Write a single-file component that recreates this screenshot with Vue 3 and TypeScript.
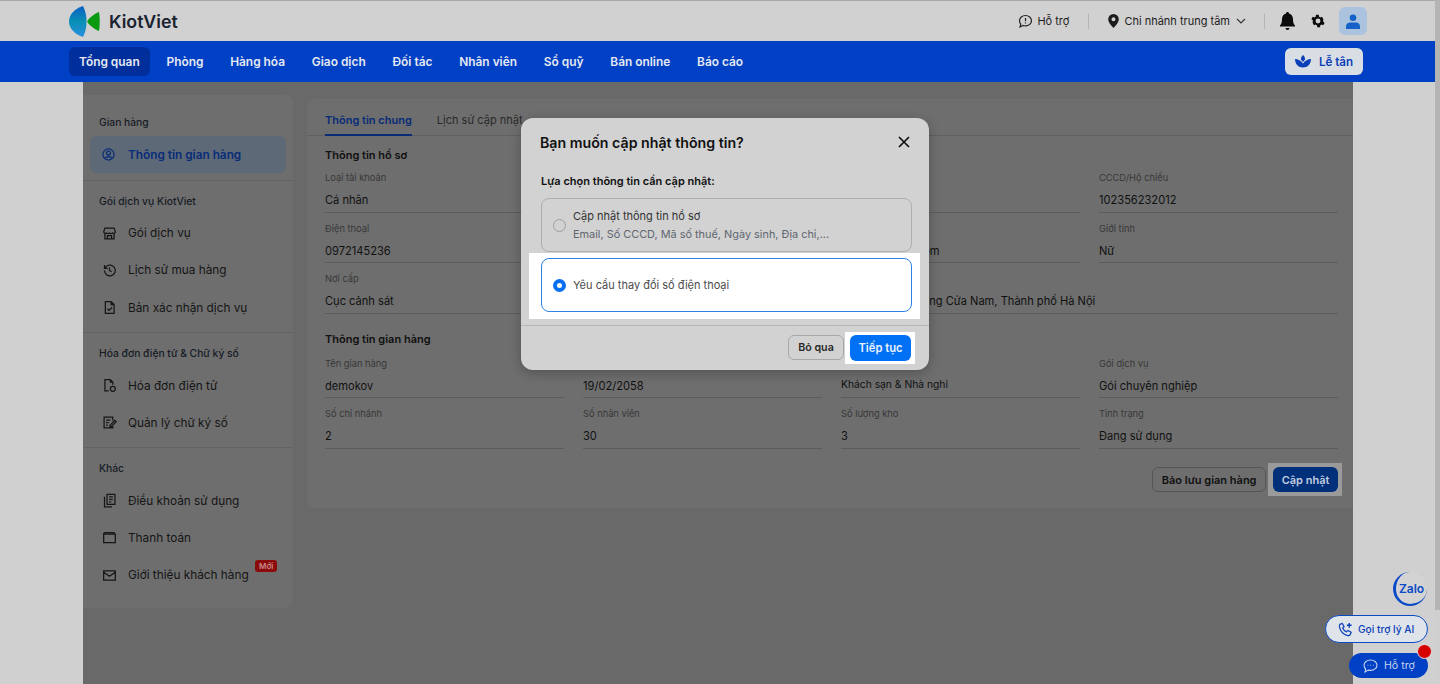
<script setup lang="ts">
const navItems: string[] = ['Tổng quan', 'Phòng', 'Hàng hóa', 'Giao dịch', 'Đối tác', 'Nhân viên', 'Sổ quỹ', 'Bán online', 'Báo cáo']

interface SideItem { label: string; icon: string; badge?: boolean }
interface SideGroup { title: string; items: SideItem[] }
const groups: SideGroup[] = [
  { title: 'Gói dịch vụ KiotViet', items: [
    { label: 'Gói dịch vụ', icon: 'M3.500 2.500h11l1.500 4.500a2 2 0 0 1-3.500 1.300A2.500 2.500 0 0 1 9 8.300a2.500 2.500 0 0 1-3.500 0A2 2 0 0 1 2 7l1.500-4.500ZM3.500 9.500v6h11v-6M6.500 15.500V11.500h5v4' },
    { label: 'Lịch sử mua hàng', icon: 'M3 9a6.500 6.500 0 1 0 1.900-4.600L3 6.300M3 2.500v3.800h3.800M9 5.500V9l2.500 1.500' },
    { label: 'Bản xác nhận dịch vụ', icon: 'M4 2h7l3.500 3.500V16H4ZM11 2v3.500h3.500M6.500 10.500l2 2 3.500-3.500' }
  ] },
  { title: 'Hóa đơn điện tử & Chữ ký số', items: [
    { label: 'Hóa đơn điện tử', icon: 'M8 15.500H3.500V2h6.500l3 3v3M10 2v3h3M13 10a3 3 0 1 0 0 6 3 3 0 0 0 0-6Z' },
    { label: 'Quản lý chữ ký số', icon: 'M13 7V2.500H2.500v13H13v-2M5 6h5M5 9h3M5 12h2M9.500 12.500l6-6 1.500 1.500-6 6H9.500Z' }
  ] },
  { title: 'Khác', items: [
    { label: 'Điều khoản sử dụng', icon: 'M6 1.500h9.500v12H6ZM8.500 4.500h4.500M8.500 7.500h4.500M8.500 10.500h2.500M3 4.500v12h9' },
    { label: 'Thanh toán', icon: 'M2 5a2 2 0 0 1 2-2h10.500v2M2 5v10h14V5ZM2 5h14' },
    { label: 'Giới thiệu khách hàng', icon: 'M2 3.500h14v11H2ZM2 5l7 5 7-5', badge: true }
  ] }
]

interface Field { label: string; value: string; wide?: boolean; small?: boolean }
const profile: Field[] = [
  { label: 'Loại tài khoản', value: 'Cá nhân' },
  { label: '', value: '' },
  { label: '', value: '' },
  { label: 'CCCD/Hộ chiếu', value: '102356232012' },
  { label: 'Điện thoại', value: '0972145236' },
  { label: '', value: '' },
  { label: '', value: 'demo1@gmail.com' },
  { label: 'Giới tính', value: 'Nữ' },
  { label: 'Nơi cấp', value: 'Cục cảnh sát' },
  { label: '', value: '' },
  { label: '', value: 'Số 12 Hà L, Phường Cửa Nam, Thành phố Hà Nội', wide: true }
]
const store: Field[] = [
  { label: 'Tên gian hàng', value: 'demokov' },
  { label: '', value: '19/02/2058' },
  { label: '', value: 'Khách sạn & Nhà nghỉ', small: true },
  { label: 'Gói dịch vụ', value: 'Gói chuyên nghiệp' },
  { label: 'Số chi nhánh', value: '2' },
  { label: 'Số nhân viên', value: '30' },
  { label: 'Số lượng kho', value: '3' },
  { label: 'Tình trạng', value: 'Đang sử dụng' }
]
</script>

<template>
  <div class="page">
    <div class="app">
      <header class="topbar">
        <div class="logo">
          <svg width="32" height="31" viewBox="0 0 32 31">
            <defs>
              <linearGradient id="lens" x1="0" y1="0" x2="0" y2="1">
                <stop offset="0" stop-color="#0b5fc4" />
                <stop offset="0.5" stop-color="#0a8fb5" />
                <stop offset="1" stop-color="#2a8fe0" />
              </linearGradient>
            </defs>
            <path d="M14 0C5 3 0 9 0 15.500S5 28 14 31c3-6 3.500-11 3.500-15.500S17 6 14 0Z" fill="url(#lens)" />
            <path d="M30 6c1 6 1 13 0 19-5-2-10-6-12-9.500C20 12 25 8 30 6Z" fill="#0a9a12" />
          </svg>
          <span class="brand">KiotViet</span>
        </div>
        <div class="top-right">
          <span class="help">
            <svg width="15" height="15" viewBox="0 0 15 15" fill="none" stroke="#222" stroke-width="1.200"><path d="M7.500 1.500c3.300 0 6 2.300 6 5.200s-2.700 5.200-6 5.200c-.8 0-1.500-.1-2.200-.4L2 13l.8-2.800C2 9.300 1.500 8 1.500 6.700c0-2.900 2.700-5.200 6-5.200Z" /><path d="M7.500 4v3.300M7.500 8.600v1" /></svg>
            Hỗ trợ
          </span>
          <i class="sep sep-a"></i>
          <span class="branch">
            <svg width="11" height="14" viewBox="0 0 11 14"><path fill-rule="evenodd" d="M5.500 0A5.300 5.300 0 0 0 .2 5.300C.2 9 5.500 14 5.500 14s5.300-5 5.300-8.700A5.300 5.300 0 0 0 5.500 0Zm0 7.300a2 2 0 1 1 0-4 2 2 0 0 1 0 4Z" fill="#1b1b1b" /></svg>
            Chi nhánh trung tâm
            <svg class="chev" width="10" height="6" viewBox="0 0 10 6" fill="none" stroke="#333" stroke-width="1.100"><path d="m1 1 4 4 4-4" /></svg>
          </span>
          <i class="sep sep-b"></i>
          <svg class="bell" width="15" height="18" viewBox="0 0 15 18"><path d="M7.500 0C8.300 0 9 .7 9 1.500c2.500.7 4 2.900 4 5.500 0 3.500.6 5 2 6.500v1H0v-1C1.400 12 2 10.500 2 7c0-2.600 1.500-4.800 4-5.500C6 .7 6.700 0 7.500 0ZM5.500 16h4a2 2 0 0 1-4 0Z" fill="#0c0c0c" /></svg>
          <svg class="gear" width="14" height="14" viewBox="2 2 20 20"><path fill-rule="evenodd" d="m19.400 13 2.100 1.600-2 3.500-2.500-1a8 8 0 0 1-1.700 1l-.4 2.700h-4l-.4-2.700a8 8 0 0 1-1.700-1l-2.500 1-2-3.500L4.600 13a8 8 0 0 1 0-2L2.500 9.400l2-3.500 2.500 1a8 8 0 0 1 1.700-1L9.100 3.200h4l.4 2.700a8 8 0 0 1 1.700 1l2.500-1 2 3.500L19.400 11a8 8 0 0 1 0 2ZM12 8.500a3.500 3.500 0 1 0 0 7 3.500 3.500 0 0 0 0-7Z" fill="#0c0c0c" /></svg>
          <span class="avatar">
            <svg width="14" height="15" viewBox="0 0 14 15"><circle cx="7" cy="3.800" r="3.300" fill="#1561c8" /><path d="M0 15v-2.500C0 10 2 8.500 4 8.500h6c2 0 4 1.500 4 4V15Z" fill="#1561c8" /></svg>
          </span>
        </div>
      </header>

      <nav class="nav">
        <span v-for="(n, i) in navItems" :key="n" class="nav-item" :class="{ current: i === 0 }">{{ n }}</span>
        <span class="reception">
          <svg width="16" height="13" viewBox="0 0 16 13"><path d="M8 0c1.400 1.300 2.100 2.700 2 4.500C9.400 5.500 8.700 6.300 8 7c-.7-.7-1.400-1.500-2-2.500C5.900 2.700 6.600 1.300 8 0Z" fill="#0a3fb8" /><path d="M0 4c3 0 6 1.700 8 4.500C10 5.700 13 4 16 4c0 5-3.500 8.500-8 8.500S0 9 0 4Z" fill="#0a3fb8" /></svg>
          Lễ tân
        </span>
      </nav>

      <div class="body">
        <main class="center">
          <aside class="sidebar">
            <section class="side-first">
              <p class="side-title">Gian hàng</p>
              <div class="side-active">
                <svg width="13" height="13" viewBox="0 0 14 14" fill="none" stroke="#082c78" stroke-width="1.300"><circle cx="7" cy="7" r="6" /><circle cx="7" cy="5.500" r="2.100" /><path d="M3.300 11.300C4 9.800 5.400 9.200 7 9.200s3 .6 3.700 2.100" /></svg>
                Thông tin gian hàng
              </div>
            </section>
            <section v-for="g in groups" :key="g.title" class="side-group">
              <p class="side-title">{{ g.title }}</p>
              <div v-for="it in g.items" :key="it.label" class="side-item">
                <svg width="15" height="15" viewBox="0 0 18 18" fill="none" stroke="#161616" stroke-width="1.500"><path :d="it.icon" /></svg>
                <span>{{ it.label }}</span>
                <em v-if="it.badge" class="badge">Mới</em>
              </div>
            </section>
          </aside>

          <section class="content">
            <div class="tabs">
              <span class="tab active">Thông tin chung</span>
              <span class="tab">Lịch sử cập nhật</span>
            </div>
            <div class="panel">
              <h3 class="block-title">Thông tin hồ sơ</h3>
              <div class="grid">
                <div v-for="(f, i) in profile" :key="i" class="field" :class="{ wide: f.wide }">
                  <label>{{ f.label }}</label>
                  <div class="value">{{ f.value }}</div>
                </div>
              </div>
              <h3 class="block-title second">Thông tin gian hàng</h3>
              <div class="grid">
                <div v-for="(f, i) in store" :key="i" class="field">
                  <label>{{ f.label }}</label>
                  <div class="value" :class="{ small: f.small }">{{ f.value }}</div>
                </div>
              </div>
              <div class="actions">
                <button class="btn-outline">Bảo lưu gian hàng</button>
                <span class="spot"><button class="btn-dark">Cập nhật</button></span>
              </div>
            </div>
          </section>
        </main>
      </div>
    </div>

    <div class="scrollbar"><i></i></div>

    <div class="modal">
      <div class="modal-head">
        <h2>Bạn muốn cập nhật thông tin?</h2>
        <svg width="12" height="12" viewBox="0 0 12 12" fill="none" stroke="#111" stroke-width="1.700"><path d="m1 1 10 10M11 1 1 11" /></svg>
      </div>
      <div class="modal-body">
        <p class="modal-label">Lựa chọn thông tin cần cập nhật:</p>
        <div class="option">
          <i class="radio"></i>
          <div>
            <div class="opt-title">Cập nhật thông tin hồ sơ</div>
            <div class="opt-sub">Email, Số CCCD, Mã số thuế, Ngày sinh, Địa chỉ,...</div>
          </div>
        </div>
        <div class="opt-spot">
          <div class="option selected">
            <i class="radio on"></i>
            <div class="opt-title">Yêu cầu thay đổi số điện thoại</div>
          </div>
        </div>
      </div>
      <div class="modal-foot">
        <button class="btn-skip">Bỏ qua</button>
        <span class="next-spot"><button class="btn-next">Tiếp tục</button></span>
      </div>
    </div>

    <div class="floating">
      <div class="zalo"><span>Zalo</span></div>
      <div class="ai">
        <svg width="15" height="15" viewBox="0 0 16 16" fill="none" stroke="#0a3fb8" stroke-width="1.300"><path d="M2 2.500 4.500 1.500 6.500 5 5 6.500c.7 1.700 2.300 3.300 4 4L10.500 9l3.500 2-1 2.500c-.5.800-1.500 1.200-2.500 1C5.500 13.500 2.500 10 1.500 5c-.1-1 0-2 .5-2.500Z" /><path d="M12 1v5M9.500 3.500h5" stroke-width="1.500" /></svg>
        Gọi trợ lý AI
      </div>
      <div class="support">
        <svg width="15" height="14" viewBox="0 0 15 14" fill="none" stroke="#c8d4ee" stroke-width="1.100"><path d="M7.500 1C11 1 14 3.200 14 6.200s-3 5.200-6.500 5.200c-.8 0-1.600-.1-2.300-.3L2 13l.7-3C1.600 9 1 7.700 1 6.200 1 3.200 4 1 7.500 1Z" /><path d="M4.500 6.300h.8M7.200 6.300H8M9.900 6.300h.8" /></svg>
        Hỗ trợ
        <i class="dot"></i>
      </div>
    </div>
  </div>
</template>

<style>
html, body { margin: 0; padding: 0; overflow: hidden; background: #d0d0d0; }
</style>

<style scoped>
.page { position: relative; width: 1440px; height: 684px; overflow: hidden; display: flex; font-family: Inter, "Liberation Sans", sans-serif; color: #111; background: #d0d0d0; }
.app { width: 1435px; height: 684px; display: flex; flex-direction: column; flex: none; }
.scrollbar { width: 5px; background: #cfcfcf; flex: none; }
.scrollbar i { display: block; width: 5px; height: 610px; background: #b4b4b4; }

.topbar { height: 41px; box-sizing: border-box; border-top: 1px solid #a8a8a8; background: #d1d1d1; display: flex; align-items: center; padding-left: 69px; flex: none; }
.logo { display: flex; align-items: center; gap: 8px; }
.brand { font-size: 17.800px; font-weight: 600; color: #1a2230; }
.top-right { margin-left: auto; display: flex; align-items: center; font-size: 11px; color: #1d1d1d; padding-right: 68px; }
.help { display: flex; align-items: center; gap: 4px; }
.sep { display: block; width: 1px; height: 15px; background: #b4b4b4; }
.sep-a { margin: 0 19px; }
.branch { display: flex; align-items: center; gap: 5px; }
.chev { margin-left: 1px; }
.sep-b { margin: 0 15px 0 18px; }
.bell { margin-right: 9px; }
.gear { margin: 0 14px 0 7px; }
.avatar { width: 28px; height: 28px; border-radius: 6px; background: #abc3df; display: flex; align-items: center; justify-content: center; }

.nav { height: 41px; background: #0040c4; display: flex; align-items: center; gap: 6.800px; padding: 0 72px 0 69px; flex: none; }
.nav-item { padding: 0 10px; height: 29px; line-height: 29px; border-radius: 6px; font-size: 11.900px; font-weight: 600; color: #e6e9f2; white-space: nowrap; }
.nav-item.current { background: #002f9c; }
.reception { margin-left: auto; width: 78px; height: 27px; box-sizing: border-box; border-radius: 6px; background: #d9dde4; display: flex; align-items: center; justify-content: center; gap: 8px; font-size: 11.600px; font-weight: 600; color: #0a3fb8; }

.body { flex: 1; display: flex; padding: 0 82px 0 83px; min-height: 0; }
.center { flex: 1; min-width: 0; background: #696969; display: flex; align-items: flex-start; gap: 14px; padding-top: 13px; }

.sidebar { width: 210px; height: 513px; background: #6e6e6e; border-radius: 0 8px 8px 0; flex: none; }
.side-first { padding: 20px 7px 7px; border-bottom: 1px solid #626262; }
.side-first .side-title { margin-left: 9px; margin-bottom: 7px; }
.side-title { margin: 0; font-size: 10.300px; font-weight: 500; line-height: 14px; color: #161c26; }
.side-active { height: 37px; border-radius: 6px; background: #5e6977; margin: 0; display: flex; align-items: center; gap: 13px; padding-left: 12px; font-size: 11.800px; font-weight: 600; color: #082c78; }
.side-group { padding: 13px 16px 6px; border-bottom: 1px solid #626262; }
.side-group:last-child { border-bottom: 0; }
.side-group .side-title { margin-bottom: 6.500px; }
.side-item { position: relative; height: 37.300px; display: flex; align-items: center; gap: 11px; padding-left: 3px; font-size: 11.800px; color: #151515; }
.badge { position: absolute; left: 156px; top: 3px; height: 12px; line-height: 12px; padding: 0 4px; border-radius: 3px; background: #8b0a0a; color: #c98a8a; font-style: normal; font-size: 8px; font-weight: 600; }

.content { flex: 1; height: 409px; margin-top: 4px; background: #6e6e6e; border-radius: 8px 0 0 8px; min-width: 0; }
.tabs { height: 37px; box-sizing: border-box; border-bottom: 1px solid #606060; display: flex; padding-left: 18px; gap: 25px; }
.tab { height: 37px; box-sizing: border-box; padding-top: 14px; line-height: 15px; font-size: 11px; color: #2a2a2a; }
.tab.active { color: #082c78; font-weight: 600; border-bottom: 2px solid #082c78; }
.panel { padding: 12px 15px 0 18px; }
.block-title { margin: 0 0 7px; font-size: 11px; line-height: 15px; font-weight: 600; color: #111; }
.block-title.second { margin-top: 18.500px; margin-bottom: 8.500px; }
.grid { display: grid; grid-template-columns: repeat(4, 239px); column-gap: 19px; row-gap: 8px; }
.field { height: 42.500px; box-sizing: border-box; border-bottom: 1px solid #5c5c5c; padding-top: 1px; }
.field.wide { grid-column: span 2; }
.field label { display: block; height: 14px; font-size: 9.300px; line-height: 14px; color: #383838; }
.field .value { margin-top: 7px; height: 16px; font-size: 11.100px; line-height: 16px; color: #111; white-space: nowrap; }
.field .value.small { margin-top: 5px; font-size: 10.300px; }
.actions { display: flex; justify-content: flex-end; align-items: center; margin-top: 18.500px; }
.btn-outline { height: 25px; box-sizing: border-box; padding: 0 8.500px; border: 1px solid #555; border-radius: 6px; background: transparent; font: 600 11px Inter, sans-serif; color: #111; }
.spot { display: block; padding: 4px 4px 4px 5px; background: #9a9a9a; margin: -4px -4px -4px 2px; }
.btn-dark { display: block; height: 25px; width: 65px; padding: 0; border: 0; border-radius: 6px; background: #00307a; font: 600 11px Inter, sans-serif; color: #c4cde0; }

.modal { position: absolute; left: 521px; top: 118px; width: 408px; height: 252px; background: #d2d2d2; border-radius: 12px; box-shadow: 0 3px 12px rgba(0, 0, 0, 0.25); display: flex; flex-direction: column; overflow: hidden; }
.modal-head { height: 48px; flex: none; display: flex; align-items: center; justify-content: space-between; padding: 0 19px; }
.modal-head h2 { margin: 0; font-size: 14.200px; font-weight: 600; color: #111; }
.modal-body { flex: 1; padding: 7px 17px 0 20px; }
.modal-label { margin: 0 0 9px; font-size: 11px; line-height: 16px; font-weight: 600; color: #111; }
.option { height: 54px; box-sizing: border-box; border: 1px solid #aeaeae; border-radius: 8px; display: flex; align-items: center; gap: 7px; padding-left: 11px; }
.opt-title { font-size: 11px; line-height: 16px; color: #333; }
.opt-sub { margin-top: 3px; font-size: 10.900px; line-height: 15px; color: #5f6670; }
.opt-spot { margin: 1px -8px 0 -12px; padding: 5px 8px 7px 12px; background: #fff; }
.option.selected { background: #fff; border-color: #2d82e6; }
.option.selected .opt-title { color: #4c4c4c; }
.radio { display: block; width: 13px; height: 13px; box-sizing: border-box; border-radius: 50%; border: 1px solid #9e9e9e; flex: none; }
.radio.on { border: 4px solid #0a6ff0; background: #fff; }
.modal-foot { height: 45px; flex: none; box-sizing: border-box; border-top: 1px solid #b8b8b8; display: flex; align-items: flex-start; justify-content: flex-end; padding: 6px 14px 0 0; }
.btn-skip { height: 25px; width: 56px; margin-top: 3px; padding: 0; box-sizing: border-box; border: 1px solid #a8a8a8; border-radius: 6px; background: transparent; font: 600 10.700px Inter, sans-serif; color: #2a2a2a; }
.next-spot { display: block; padding: 3px 4px 3px 5px; margin-left: 1px; background: #fff; }
.btn-next { display: block; width: 61px; height: 26px; padding: 0; border: 0; border-radius: 6px; background: #0070f5; font: 600 11.200px Inter, sans-serif; color: #eaf3ff; }

.floating { position: absolute; right: 12px; top: 572px; width: 110px; height: 112px; font-size: 10.200px; }
.zalo { position: absolute; right: 1px; top: 0; width: 34px; height: 34px; box-sizing: border-box; border-radius: 50%; background: #d3d3d3; border-left: 3px solid #0b4ac6; border-bottom: 2px solid #0b4ac6; display: flex; align-items: center; justify-content: center; }
.zalo span { font-size: 12px; font-weight: 600; color: #0b4ac6; }
.ai { position: absolute; right: 0; top: 43px; width: 103px; height: 28px; box-sizing: border-box; border: 1.500px solid #0b4ac6; border-radius: 14px; background: #dfe3ea; color: #0a3fb8; font-weight: 500; display: flex; align-items: center; gap: 5px; padding-left: 12px; }
.support { position: absolute; right: 0; top: 81px; width: 79px; height: 25px; border-radius: 13px; background: #0040c4; color: #c8d4ee; display: flex; align-items: center; gap: 6px; padding-left: 14px; box-sizing: border-box; font-size: 10.600px; }
.dot { position: absolute; right: -4px; top: -9px; width: 15px; height: 15px; box-sizing: border-box; border-radius: 50%; background: #d60000; border: 1px solid #e0e0e0; }
</style>
